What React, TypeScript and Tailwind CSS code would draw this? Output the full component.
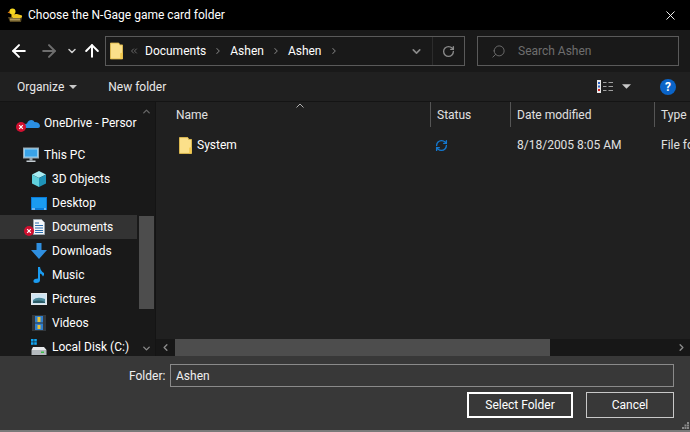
import { ArrowLeft, ArrowRight, ArrowUp, ChevronDown, ChevronLeft, ChevronRight, ChevronUp, ChevronsLeft, RotateCw, Search, X, RefreshCw } from "lucide-react";

function FolderIcon({ className }: { className?: string }) {
  return (
    <svg viewBox="0 0 14 18" className={className}>
      <path d="M0.5 0.5 H9.5 L10.5 2.5 H13.5 V17.5 H0.5 Z" fill="#fbe08a" stroke="#e3bd4f" />
      <path d="M11 17.5 V11.5 L13.5 10.5 V17.5 Z" fill="#f2c94f" />
    </svg>
  );
}

function ErrorBadge({ className }: { className: string }) {
  return (
    <svg viewBox="0 0 10 10" className={className}>
      <circle cx="5" cy="5" r="5" fill="#d01030" />
      <path d="M3.2 3.2 L6.8 6.8 M6.8 3.2 L3.2 6.8" stroke="#fff" strokeWidth="1.2" />
    </svg>
  );
}

function Caret({ className }: { className?: string }) {
  return (
    <svg viewBox="0 0 8 4" className={className}>
      <path d="M0 0 H8 L4 4 Z" fill="#c8c8c8" />
    </svg>
  );
}

function NavIcon({ name }: { name: string }) {
  if (name === "onedrive")
    return (
      <svg viewBox="0 0 16 10" className="w-4 h-[10px]">
        <path d="M2 10 Q0 9 0.5 7 Q1 5.5 3 5.5 Q4 2 7.5 2 Q9.5 2 10.5 4 Q15.5 4 16 8 Q16 10 14 10 Z" fill="#2b8fe3" />
      </svg>
    );
  if (name === "pc")
    return (
      <svg viewBox="0 0 16 16" className="w-4 h-4">
        <rect x="0.5" y="1" width="15" height="10" fill="#8fd0f5" stroke="#9aa5ad" />
        <rect x="2" y="2.5" width="12" height="7" fill="#3aa3e8" />
        <rect x="6.5" y="11" width="3" height="2.5" fill="#9aa5ad" />
        <rect x="3.5" y="13.5" width="9" height="1.5" fill="#c4ccd2" />
      </svg>
    );
  if (name === "3d")
    return (
      <svg viewBox="0 0 16 16" className="w-4 h-4">
        <path d="M8 0 L15 3.5 L8 7 L1 3.5 Z" fill="#a8ecf2" />
        <path d="M1 3.5 L8 7 V16 L1 12.5 Z" fill="#5fd0dc" />
        <path d="M15 3.5 L8 7 V16 L15 12.5 Z" fill="#1f93b8" />
      </svg>
    );
  if (name === "desktop")
    return (
      <svg viewBox="0 0 16 13" className="w-4 h-[13px]">
        <rect x="0" y="0" width="16" height="13" fill="#0a7bd8" />
        <rect x="1" y="1" width="14" height="10" fill="#1a9bf0" />
        <rect x="1" y="11.5" width="3" height="1" fill="#d8eefc" />
        <rect x="13" y="11.5" width="2" height="1" fill="#d8eefc" />
      </svg>
    );
  if (name === "docs")
    return (
      <svg viewBox="0 0 12 16" className="w-3 h-4">
        <path d="M0.5 0.5 H8.5 L11.5 3.5 V15.5 H0.5 Z" fill="#f4f6f8" stroke="#9aa5ad" />
        <path d="M2 4 H6 M2 6.5 H10 M2 9 H10 M2 11.5 H10 M2 13.5 H10" stroke="#2d6fb0" />
      </svg>
    );
  if (name === "downloads")
    return (
      <svg viewBox="0 0 16 16" className="w-4 h-4">
        <path d="M5.5 0 H10.5 V7 H16 L8 16 L0 7 H5.5 Z" fill="#2f8fe0" />
      </svg>
    );
  if (name === "music")
    return (
      <svg viewBox="0 0 12 16" className="w-3 h-4">
        <path d="M5 0 H7 Q7.5 4 11 6 Q11.5 8 10 9.5 Q9 7 7 6.5 V13 Q7 16 3 16 Q0 16 0.5 13.5 Q1 11.5 5 11.5 Z" fill="#1a9bf0" />
      </svg>
    );
  if (name === "pictures")
    return (
      <svg viewBox="0 0 16 12" className="w-4 h-3">
        <rect x="0.5" y="0.5" width="15" height="11" fill="#cfe4f2" stroke="#e4e8ea" />
        <path d="M2 7 Q6 3 14 6 V10 H2 Z" fill="#4b8a9c" />
        <path d="M2 8.5 Q8 6.5 14 9 V10 H2 Z" fill="#2c5c66" />
      </svg>
    );
  if (name === "videos")
    return (
      <svg viewBox="0 0 14 16" className="w-[14px] h-4">
        <rect x="0" y="0" width="14" height="16" fill="#33383c" />
        <rect x="3" y="1" width="8" height="6.5" fill="#2f7fd0" />
        <rect x="3" y="8.5" width="8" height="6.5" fill="#2f7fd0" />
        <path d="M5.5 2 H8.5 V7 H5.5 Z M5.5 10 H8.5 V14 H5.5 Z" fill="#e7c23a" />
      </svg>
    );
  return (
    <svg viewBox="0 0 16 16" className="w-4 h-4">
      <rect x="0" y="0" width="2.6" height="2.6" fill="#12a5f0" />
      <rect x="3.2" y="0" width="2.6" height="2.6" fill="#12a5f0" />
      <rect x="0" y="3.2" width="2.6" height="2.6" fill="#12a5f0" />
      <rect x="3.2" y="3.2" width="2.6" height="2.6" fill="#12a5f0" />
      <path d="M2 8 H13 L15.5 11 H0.5 Z" fill="#e6e8ea" />
      <rect x="0.5" y="11" width="15" height="5" fill="#b4babe" />
      <rect x="10" y="12.5" width="3" height="1.5" fill="#3cc04a" />
    </svg>
  );
}

const navItems = [
  { label: "3D Objects", icon: "3d" },
  { label: "Desktop", icon: "desktop" },
  { label: "Documents", icon: "docs", selected: true },
  { label: "Downloads", icon: "downloads" },
  { label: "Music", icon: "music" },
  { label: "Pictures", icon: "pictures" },
  { label: "Videos", icon: "videos" },
  { label: "Local Disk (C:)", icon: "disk" },
];

export default function App() {
  return (
    <div className="w-[690px] h-[432px] flex flex-col overflow-hidden bg-[#191919] text-white text-[12px] font-['Roboto',sans-serif]">
      {/* title bar */}
      <div className="h-[30px] shrink-0 bg-black flex items-center pl-[7px] pr-[12px]">
        <svg viewBox="0 0 16 14" className="w-4 h-[14px] mr-[5px]">
          <path d="M1 9 H15 L14 14 H3 Z" fill="#5a4a20" />
          <path d="M3 10.5 H13 V12.5 H3 Z" fill="#b09a5a" />
          <path d="M6 9 Q6 5.5 10 6 L15 7.5 Q15.5 9.5 13 10 H6 Z" fill="#f0c820" />
          <circle cx="5.5" cy="3.5" r="3" fill="#f5d820" />
          <path d="M3 3 L0.5 4.5 L3 5.5 Z" fill="#e08010" />
          <rect x="4.5" y="6" width="3" height="3.5" fill="#f0c820" />
        </svg>
        <span className="flex-1 leading-none">Choose the N-Gage game card folder</span>
        <X className="w-[15px] h-[15px]" strokeWidth={1.5} />
      </div>

      {/* address row */}
      <div className="h-[42px] shrink-0 bg-[#191919] flex items-center pl-[9px] pr-[11px]">
        <ArrowLeft className="w-[20px] h-[20px]" strokeWidth={2.4} />
        <ArrowRight className="w-[20px] h-[20px] ml-[10px] text-[#6e6e6e]" strokeWidth={2.4} />
        <ChevronDown className="w-[12px] h-[12px] ml-[7px] text-[#d0d0d0]" strokeWidth={3} />
        <ArrowUp className="w-[20px] h-[20px] ml-[4px]" strokeWidth={2.4} />
        <div className="ml-[3px] w-[360px] h-[30px] border border-[#5a5a5a] flex items-center pl-[4px]">
          <FolderIcon className="w-[13px] h-[18px]" />
          <ChevronsLeft className="w-[10px] h-[10px] ml-[6px] text-[#7a7a7a]" strokeWidth={2} />
          <span className="ml-[6px]">Documents</span>
          <ChevronRight className="w-[10px] h-[10px] ml-[7px] text-[#7a7a7a]" strokeWidth={2.5} />
          <span className="ml-[7px]">Ashen</span>
          <ChevronRight className="w-[10px] h-[10px] ml-[7px] text-[#7a7a7a]" strokeWidth={2.5} />
          <span className="ml-[7px]">Ashen</span>
          <ChevronRight className="w-[10px] h-[10px] ml-[7px] text-[#7a7a7a]" strokeWidth={2.5} />
          <div className="flex-1" />
          <ChevronDown className="w-[13px] h-[13px] mr-[9px] text-[#8a8a8a]" strokeWidth={3} />
          <div className="w-[32px] h-full border-l border-[#2c2c2c] flex items-center justify-center">
            <RotateCw className="w-[13px] h-[13px] text-[#8a8a8a]" strokeWidth={2.5} />
          </div>
        </div>
        <div className="ml-[12px] flex-1 h-[30px] border border-[#5a5a5a] flex items-center pl-[13px]">
          <Search className="w-[15px] h-[15px] text-[#6e6e6e] -scale-x-100" strokeWidth={1.5} />
          <span className="ml-[12px] text-[#6e6e6e]">Search Ashen</span>
        </div>
      </div>

      {/* toolbar */}
      <div className="h-[30px] shrink-0 bg-[#202020] border-b border-[#141414] flex items-center pl-[17px] pr-[14px]">
        <span className="text-[#e8e8e8]">Organize</span>
        <Caret className="w-[8px] h-[4px] ml-[5px]" />
        <span className="ml-[31px] text-[#e8e8e8]">New folder</span>
        <div className="flex-1" />
        <svg viewBox="0 0 16 13" className="w-4 h-[13px]">
          <rect x="0" y="0" width="4" height="13" fill="#e8e8e8" />
          <rect x="1" y="2" width="2" height="2" fill="#2a60c0" />
          <rect x="1" y="5.5" width="2" height="2" fill="#2a60c0" />
          <rect x="1" y="9" width="2" height="2" fill="#d02020" />
          <path d="M6 2.5 H9.5 M11.5 2.5 H16 M6 6.5 H9.5 M11.5 6.5 H16 M6 10.5 H9.5 M11.5 10.5 H16" stroke="#a0a0a0" />
        </svg>
        <Caret className="w-[9px] h-[5px] ml-[9px]" />
        <div className="ml-[29px] w-[16px] h-[16px] rounded-full bg-[#0a64c8] flex items-center justify-center text-[12px] font-bold leading-none">?</div>
      </div>

      {/* main panes */}
      <div className="flex-1 min-h-0 flex">
        <div className="w-[156px] shrink-0 flex bg-[#191919]">
          <div className="w-[139px] shrink-0 pt-[9px] overflow-hidden">
            <div className="h-[24px] flex items-center pl-[24px] relative">
              <NavIcon name="onedrive" />
              <ErrorBadge className="absolute left-[16px] top-[11px] w-[10px] h-[10px]" />
              <span className="ml-[4px] whitespace-nowrap">OneDrive - Persor</span>
            </div>
            <div className="h-[24px] mt-[8px] flex items-center pl-[23px]">
              <NavIcon name="pc" />
              <span className="ml-[5px]">This PC</span>
            </div>
            {navItems.map((item) => (
              <div
                key={item.label}
                className={`h-[24px] flex items-center relative ${item.selected ? "bg-[#333333] mr-[2px]" : ""}`}
              >
                <div className="w-[16px] ml-[31px] flex justify-center">
                  <NavIcon name={item.icon} />
                </div>
                {item.selected && <ErrorBadge className="absolute left-[24px] top-[11px] w-[10px] h-[10px]" />}
                <span className="ml-[5px] whitespace-nowrap">{item.label}</span>
              </div>
            ))}
          </div>
          <div className="w-[15px] shrink-0 flex flex-col items-center pt-[4px] pb-[2px]">
            <ChevronUp className="w-[11px] h-[11px] text-[#666666]" strokeWidth={3} />
            <div className="w-full h-[93px] mt-[99px] bg-[#4d4d4d]" />
            <div className="flex-1" />
            <ChevronDown className="w-[11px] h-[11px] text-[#8a8a8a]" strokeWidth={3} />
          </div>
          <div className="flex-1 border-r border-[#141414]" />
        </div>

        <div className="flex-1 min-w-0 flex flex-col bg-[#202020]">
          <div className="flex-1 min-h-0 overflow-hidden relative">
            <svg viewBox="0 0 8 5" className="absolute left-[140px] top-[1px] w-[8px] h-[5px]">
              <path d="M0.5 4.5 L4 1 L7.5 4.5" fill="none" stroke="#b0b0b0" />
            </svg>
            <div className="h-[25px] grid grid-cols-[274px_80px_144px_1fr] items-stretch">
              <div className="pl-[20px] flex items-center text-[#e0e0e0]">Name</div>
              <div className="pl-[6px] flex items-center border-l border-[#555555] text-[#e0e0e0]">Status</div>
              <div className="pl-[6px] flex items-center border-l border-[#555555] text-[#e0e0e0]">Date modified</div>
              <div className="pl-[6px] flex items-center border-l border-[#555555] text-[#e0e0e0]">Type</div>
            </div>
            <div className="h-[24px] mt-[6px] grid grid-cols-[274px_80px_144px_1fr] items-center">
              <div className="pl-[23px] flex items-center">
                <FolderIcon className="w-[13px] h-[17px]" />
                <span className="ml-[5px]">System</span>
              </div>
              <div className="pl-[5px]">
                <RefreshCw className="w-[13px] h-[13px] text-[#1478d0]" strokeWidth={2.5} />
              </div>
              <div className="pl-[7px] text-[#e0e0e0]">8/18/2005 8:05 AM</div>
              <div className="pl-[7px] whitespace-nowrap text-[#e0e0e0]">File fo</div>
            </div>
          </div>
          <div className="h-[17px] shrink-0 bg-[#171717] flex items-center">
            <ChevronLeft className="w-[17px] h-[11px] text-[#8a8a8a] mx-[1px]" strokeWidth={3} />
            <div className="w-[375px] h-full bg-[#4d4d4d]" />
            <div className="flex-1" />
            <ChevronRight className="w-[11px] h-[11px] text-[#8a8a8a] mr-[3px]" strokeWidth={3} />
          </div>
        </div>
      </div>

      {/* footer */}
      <div className="h-[76px] shrink-0 bg-[#383838] border-b-2 border-[#7a7a7a] pt-[8px] pr-[16px] relative">
        <div className="flex items-center">
          <span className="ml-[129px] w-[41px] text-[#f0f0f0]">Folder:</span>
          <div className="flex-1 h-[23px] border border-[#8a8a8a] flex items-center pl-[5px] text-[#f0f0f0]">Ashen</div>
        </div>
        <div className="flex justify-end mt-[5px] gap-[13px]">
          <div className="w-[106px] h-[26px] border-2 border-white flex items-center justify-center">Select Folder</div>
          <div className="w-[88px] h-[26px] border border-[#c8c8c8] flex items-center justify-center">Cancel</div>
        </div>
        <svg viewBox="0 0 7 7" className="absolute right-[1px] bottom-[1px] w-[7px] h-[7px]">
          <path d="M5 0 H7 V2 H5 Z M2.5 2.5 H4.5 V4.5 H2.5 Z M5 2.5 H7 V4.5 H5 Z M0 5 H2 V7 H0 Z M2.5 5 H4.5 V7 H2.5 Z M5 5 H7 V7 H5 Z" fill="#8a8a8a" />
        </svg>
      </div>
    </div>
  );
}
